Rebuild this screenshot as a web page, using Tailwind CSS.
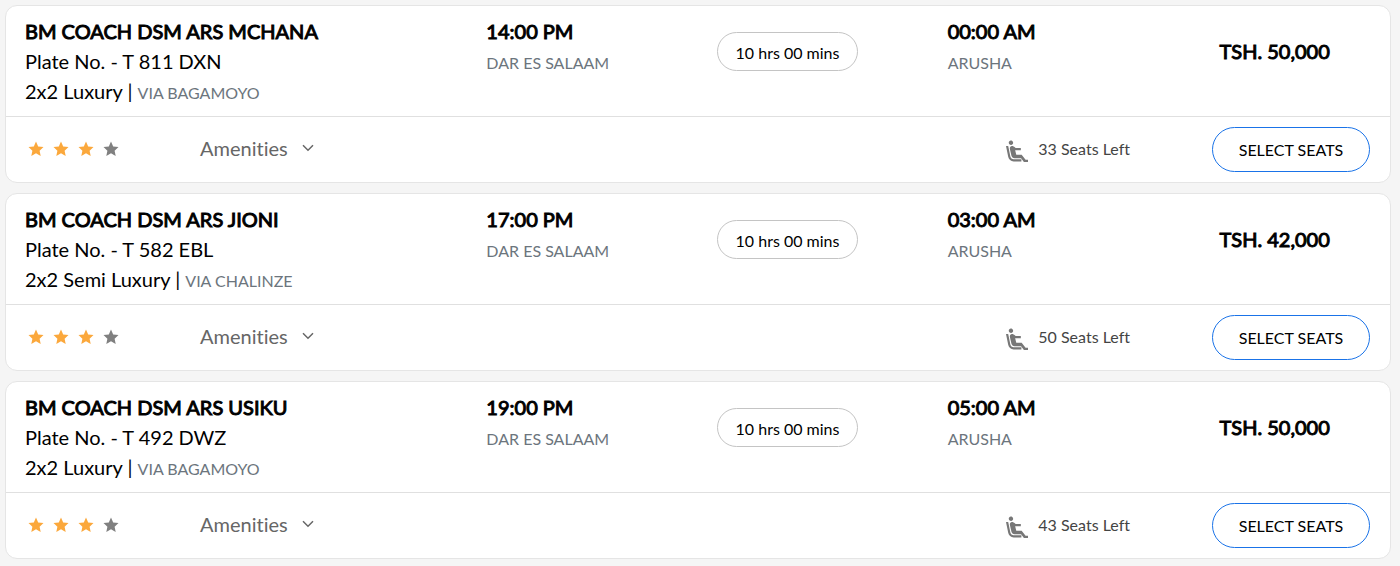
<!DOCTYPE html>
<html lang="en">
<head>
  <meta charset="UTF-8">
  <meta name="viewport" content="width=device-width, initial-scale=1.0">
  <title>Available Buses</title>
  <script src="https://cdn.jsdelivr.net/npm/@tailwindcss/browser@4"></script>
</head>
<body class="bg-[#f5f5f5] font-['Lato',sans-serif] text-black [font-variant-ligatures:none]">

  <!-- Shared icons -->
  <svg class="hidden" aria-hidden="true">
    <symbol id="star" viewBox="0 0 16 16">
      <path d="M8 .6l2.2 4.9 5.3.6-3.9 3.6 1.1 5.3L8 12.3 3.3 15l1.1-5.3L.5 6.1l5.3-.6z" fill="currentColor"/>
    </symbol>
    <symbol id="chevron" viewBox="0 0 12 8">
      <path d="M1 1.2l5 5 5-5" fill="none" stroke="currentColor" stroke-width="1.5"/>
    </symbol>
    <symbol id="seat" viewBox="2 1.5 20 20">
      <path d="M5.35 5.64c-.9-.64-1.12-1.88-.49-2.79.63-.9 1.88-1.12 2.79-.49.9.64 1.12 1.88.49 2.79-.64.9-1.88 1.12-2.79.49zM16 19H8.93c-1.48 0-2.74-1.08-2.96-2.54L4 7H2l1.99 9.76C4.37 19.2 6.47 21 8.94 21H16v-2zm.23-4h-4.88l-1.03-4.1h5.15V8.8h-4.7L9.14 7.47c-.23-.18-.49-.3-.76-.38-.32-.09-.66-.12-.99-.06h-.02c-1.23.22-2.05 1.39-1.84 2.61l1.35 5.92C7.16 17 8.39 18 9.83 18h5.85l2.6 3.4H22v-2h-2.2z" fill="currentColor"/>
    </symbol>
  </svg>

  <main class="flex flex-col gap-[10px] pt-[5px] pr-[9px] pb-[7px] pl-[5px]">

    <!-- Mchana -->
    <article class="rounded-xl border border-[#e5e5e5] bg-white">
      <div class="grid grid-cols-6 border-b border-[#e0e0e0] py-[10px] text-xl leading-[30px]">
        <div class="col-span-2 pl-[19px]">
          <h2 class="[-webkit-text-stroke:1px]">BM COACH DSM ARS MCHANA</h2>
          <p>Plate No. - T 811 DXN</p>
          <p>2x2 Luxury | <span class="text-base text-[#6c757d]">VIA BAGAMOYO</span></p>
        </div>
        <div class="pl-[19px]">
          <p class="[-webkit-text-stroke:1px]">14:00 PM</p>
          <p class="text-base leading-[34px] text-[#6c757d]">DAR ES SALAAM</p>
        </div>
        <div class="pt-4 pl-[19px]">
          <span class="block w-[141px] rounded-full border border-[#c4c4c4] pt-2 pb-[5px] text-center text-base leading-6">10 hrs 00 mins</span>
        </div>
        <div class="pl-[19px]">
          <p class="[-webkit-text-stroke:1px]">00:00 AM</p>
          <p class="text-base leading-[34px] text-[#6c757d]">ARUSHA</p>
        </div>
        <p class="pt-5 text-center [-webkit-text-stroke:1px]">TSH. 50,000</p>
      </div>
      <div class="flex items-center px-5 py-[10px]">
        <div class="flex w-[174px] gap-[9px] pb-[2px] pl-[2px]" role="img" aria-label="3 of 4 stars">
          <svg class="size-4 text-[#fba83c]"><use href="#star"/></svg>
          <svg class="size-4 text-[#fba83c]"><use href="#star"/></svg>
          <svg class="size-4 text-[#fba83c]"><use href="#star"/></svg>
          <svg class="size-4 text-[#808080]"><use href="#star"/></svg>
        </div>
        <button type="button" class="flex items-center gap-[14px] pb-1 text-xl text-[#666666]">Amenities <svg class="h-2 w-3"><use href="#chevron"/></svg></button>
        <div class="ml-auto flex items-center gap-[10px] pb-[2px] text-base text-[#444444]">
          <svg class="mt-1 size-[22px] text-[#777777]"><use href="#seat"/></svg>33 Seats Left
        </div>
        <button type="button" class="ml-[82px] h-[45px] w-[158px] rounded-full border border-[#1a73e8] text-base">SELECT SEATS</button>
      </div>
    </article>

    <!-- Jioni -->
    <article class="rounded-xl border border-[#e5e5e5] bg-white">
      <div class="grid grid-cols-6 border-b border-[#e0e0e0] py-[10px] text-xl leading-[30px]">
        <div class="col-span-2 pl-[19px]">
          <h2 class="[-webkit-text-stroke:1px]">BM COACH DSM ARS JIONI</h2>
          <p>Plate No. - T 582 EBL</p>
          <p>2x2 Semi Luxury | <span class="text-base text-[#6c757d]">VIA CHALINZE</span></p>
        </div>
        <div class="pl-[19px]">
          <p class="[-webkit-text-stroke:1px]">17:00 PM</p>
          <p class="text-base leading-[34px] text-[#6c757d]">DAR ES SALAAM</p>
        </div>
        <div class="pt-4 pl-[19px]">
          <span class="block w-[141px] rounded-full border border-[#c4c4c4] pt-2 pb-[5px] text-center text-base leading-6">10 hrs 00 mins</span>
        </div>
        <div class="pl-[19px]">
          <p class="[-webkit-text-stroke:1px]">03:00 AM</p>
          <p class="text-base leading-[34px] text-[#6c757d]">ARUSHA</p>
        </div>
        <p class="pt-5 text-center [-webkit-text-stroke:1px]">TSH. 42,000</p>
      </div>
      <div class="flex items-center px-5 py-[10px]">
        <div class="flex w-[174px] gap-[9px] pb-[2px] pl-[2px]" role="img" aria-label="3 of 4 stars">
          <svg class="size-4 text-[#fba83c]"><use href="#star"/></svg>
          <svg class="size-4 text-[#fba83c]"><use href="#star"/></svg>
          <svg class="size-4 text-[#fba83c]"><use href="#star"/></svg>
          <svg class="size-4 text-[#808080]"><use href="#star"/></svg>
        </div>
        <button type="button" class="flex items-center gap-[14px] pb-1 text-xl text-[#666666]">Amenities <svg class="h-2 w-3"><use href="#chevron"/></svg></button>
        <div class="ml-auto flex items-center gap-[10px] pb-[2px] text-base text-[#444444]">
          <svg class="mt-1 size-[22px] text-[#777777]"><use href="#seat"/></svg>50 Seats Left
        </div>
        <button type="button" class="ml-[82px] h-[45px] w-[158px] rounded-full border border-[#1a73e8] text-base">SELECT SEATS</button>
      </div>
    </article>

    <!-- Usiku -->
    <article class="rounded-xl border border-[#e5e5e5] bg-white">
      <div class="grid grid-cols-6 border-b border-[#e0e0e0] py-[10px] text-xl leading-[30px]">
        <div class="col-span-2 pl-[19px]">
          <h2 class="[-webkit-text-stroke:1px]">BM COACH DSM ARS USIKU</h2>
          <p>Plate No. - T 492 DWZ</p>
          <p>2x2 Luxury | <span class="text-base text-[#6c757d]">VIA BAGAMOYO</span></p>
        </div>
        <div class="pl-[19px]">
          <p class="[-webkit-text-stroke:1px]">19:00 PM</p>
          <p class="text-base leading-[34px] text-[#6c757d]">DAR ES SALAAM</p>
        </div>
        <div class="pt-4 pl-[19px]">
          <span class="block w-[141px] rounded-full border border-[#c4c4c4] pt-2 pb-[5px] text-center text-base leading-6">10 hrs 00 mins</span>
        </div>
        <div class="pl-[19px]">
          <p class="[-webkit-text-stroke:1px]">05:00 AM</p>
          <p class="text-base leading-[34px] text-[#6c757d]">ARUSHA</p>
        </div>
        <p class="pt-5 text-center [-webkit-text-stroke:1px]">TSH. 50,000</p>
      </div>
      <div class="flex items-center px-5 py-[10px]">
        <div class="flex w-[174px] gap-[9px] pb-[2px] pl-[2px]" role="img" aria-label="3 of 4 stars">
          <svg class="size-4 text-[#fba83c]"><use href="#star"/></svg>
          <svg class="size-4 text-[#fba83c]"><use href="#star"/></svg>
          <svg class="size-4 text-[#fba83c]"><use href="#star"/></svg>
          <svg class="size-4 text-[#808080]"><use href="#star"/></svg>
        </div>
        <button type="button" class="flex items-center gap-[14px] pb-1 text-xl text-[#666666]">Amenities <svg class="h-2 w-3"><use href="#chevron"/></svg></button>
        <div class="ml-auto flex items-center gap-[10px] pb-[2px] text-base text-[#444444]">
          <svg class="mt-1 size-[22px] text-[#777777]"><use href="#seat"/></svg>43 Seats Left
        </div>
        <button type="button" class="ml-[82px] h-[45px] w-[158px] rounded-full border border-[#1a73e8] text-base">SELECT SEATS</button>
      </div>
    </article>

  </main>

</body>
</html>
